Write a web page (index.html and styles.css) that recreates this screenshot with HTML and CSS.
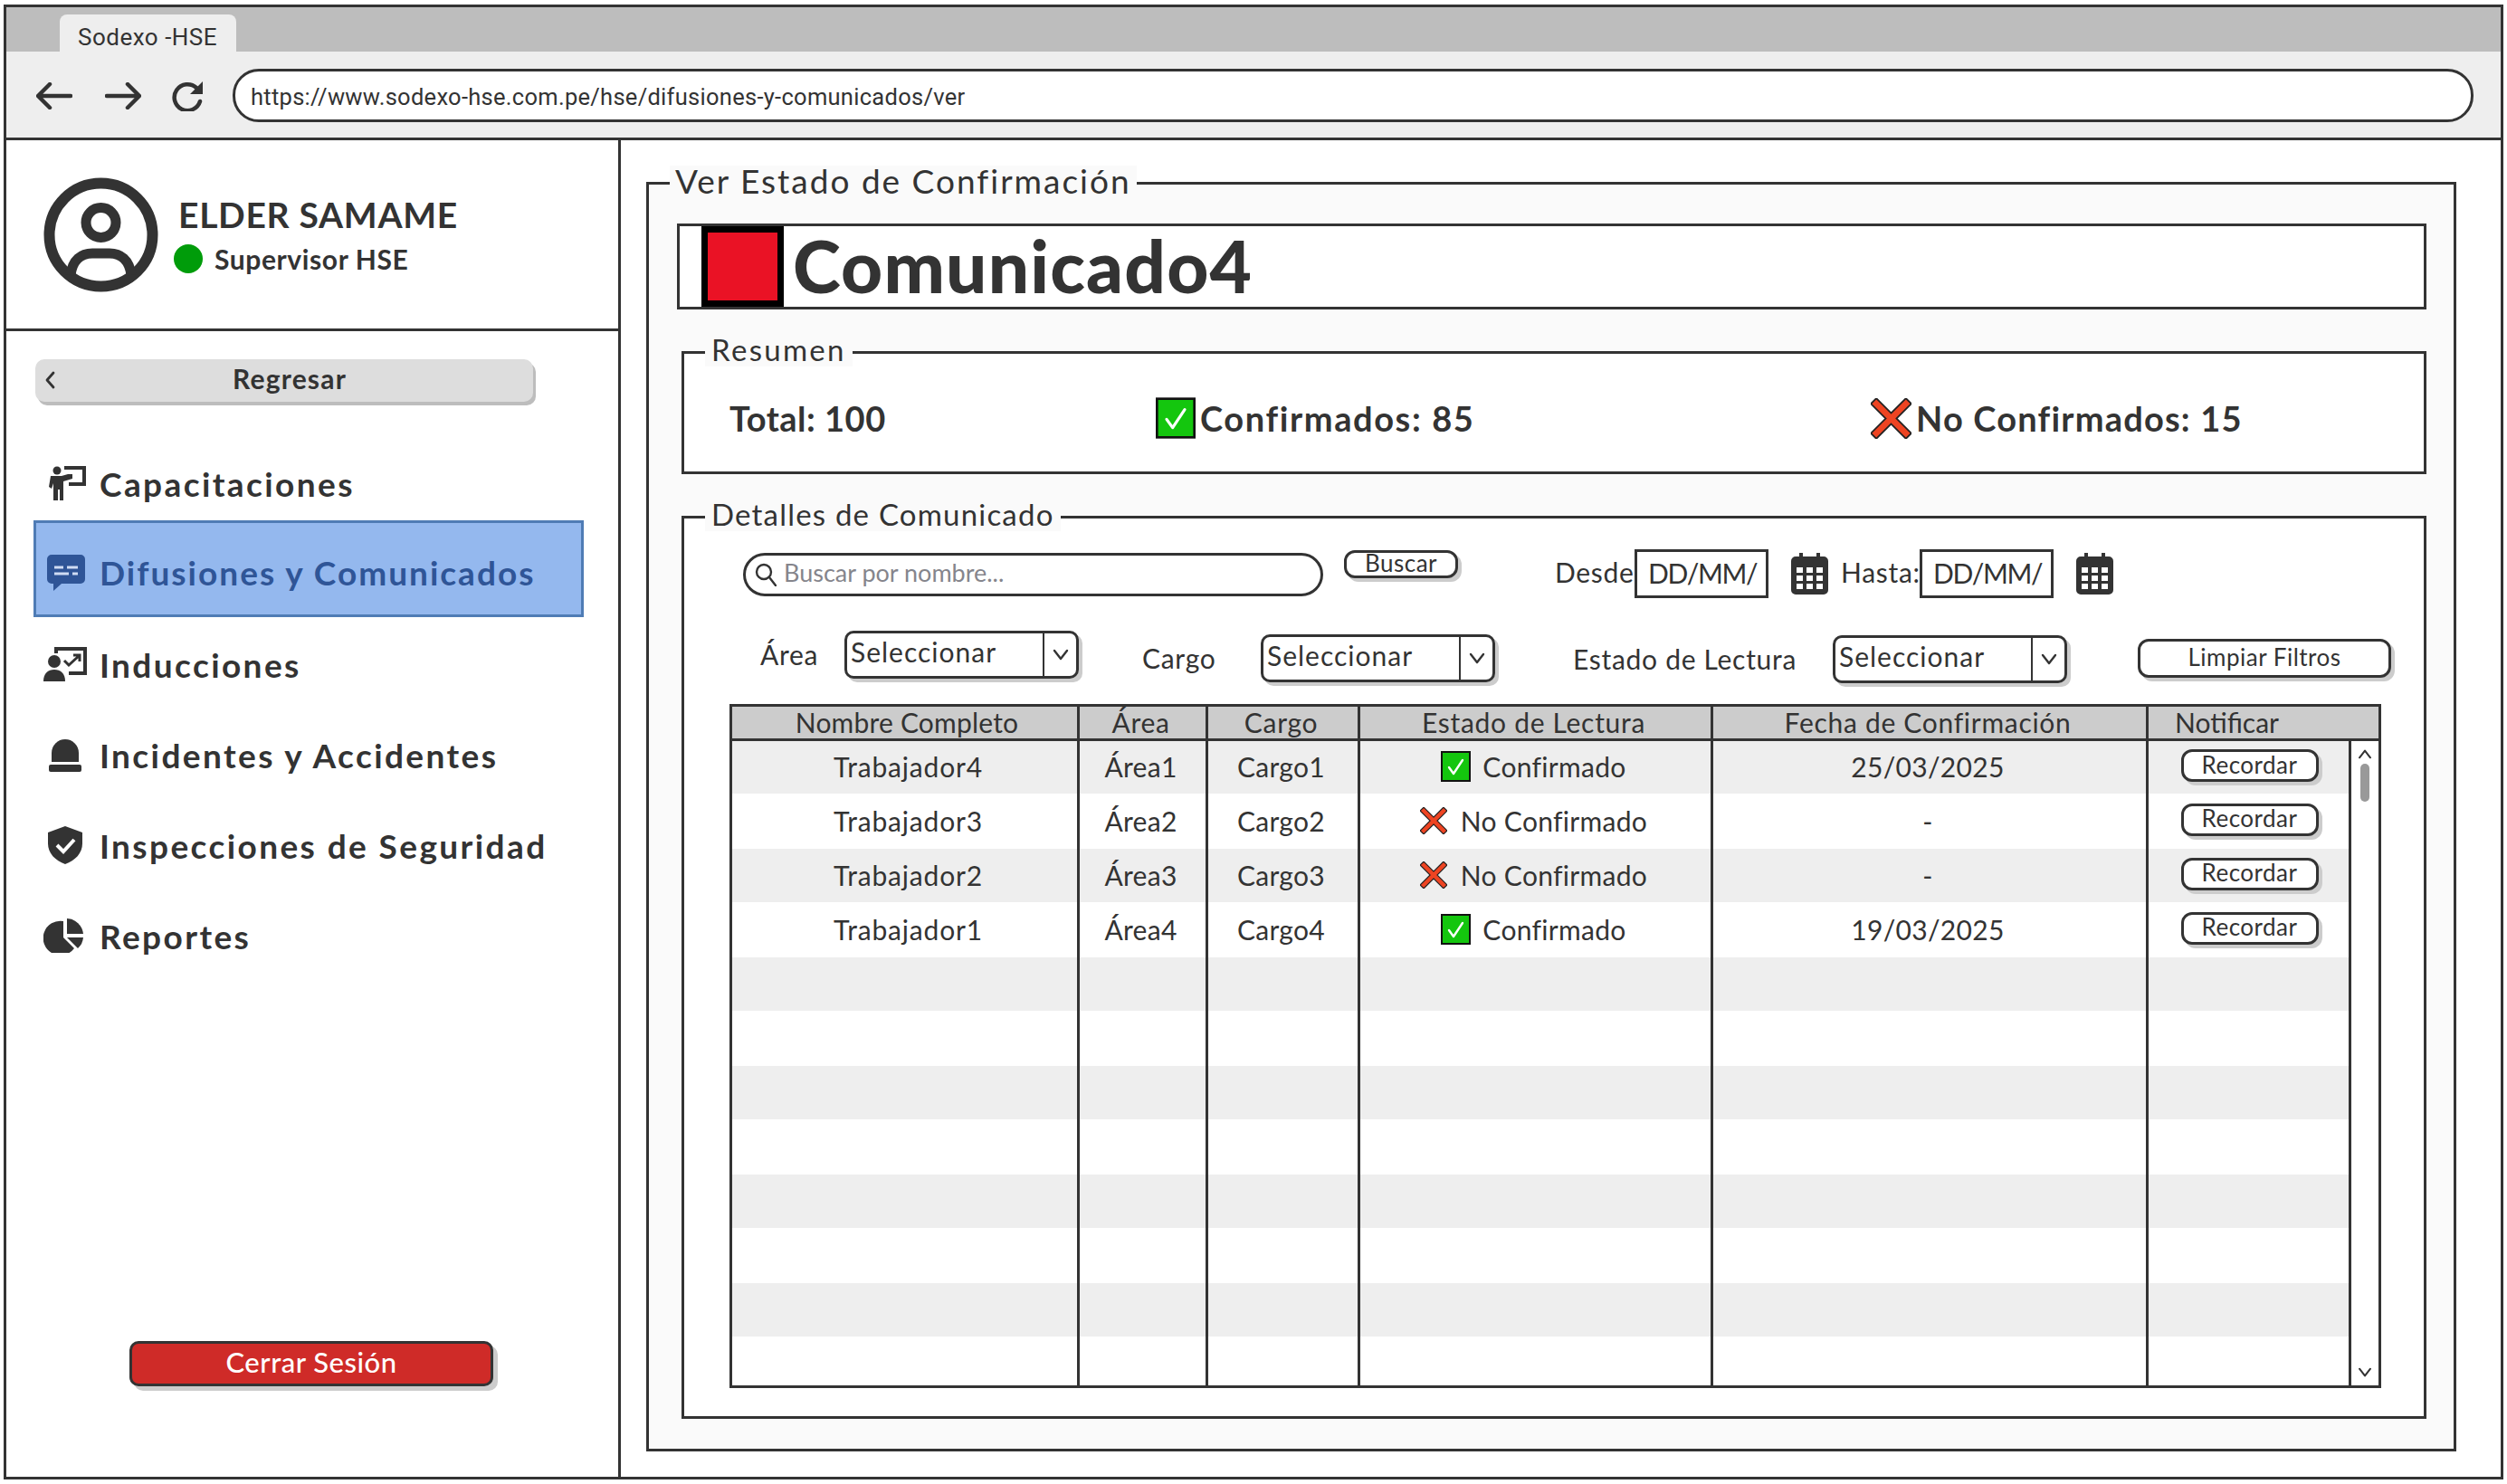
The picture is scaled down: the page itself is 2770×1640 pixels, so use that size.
FILE: index.html
```html
<!DOCTYPE html>
<html lang="es">
<head>
<meta charset="utf-8">
<title>Sodexo - HSE</title>
<link rel="stylesheet" href="styles.css">
</head>
<body>
<svg class="defs" width="0" height="0" aria-hidden="true">
  <symbol id="ico-check" viewBox="0 0 33 34">
    <rect x="1" y="1" width="31" height="32" fill="#14c60e" stroke="#111" stroke-width="2"/>
    <path d="M9 18l5 7 10-15" fill="none" stroke="#fff" stroke-width="2.4" stroke-linecap="round" stroke-linejoin="round"/>
  </symbol>
  <symbol id="ico-x" viewBox="0 0 44 44">
    <path d="M6 6L38 38M38 6L6 38" fill="none" stroke="#222" stroke-width="10" stroke-linecap="square"/>
    <path d="M6 6L38 38M38 6L6 38" fill="none" stroke="#ee4422" stroke-width="6.5" stroke-linecap="square"/>
  </symbol>
  <symbol id="ico-cal" viewBox="0 0 41 47">
    <path d="M5 5h4V1h4v4h15V1h4v4h4a5 5 0 0 1 5 5v32a5 5 0 0 1-5 5H5a5 5 0 0 1-5-5V10a5 5 0 0 1 5-5z" fill="#333"/>
    <path d="M6 17h7v6H6zM17 17h7v6h-7zM28 17h7v6h-7zM6 26h7v6H6zM17 26h7v6h-7zM28 26h7v6h-7zM6 35h7v6H6zM17 35h7v6h-7zM28 35h7v6h-7z" fill="#fff"/>
  </symbol>
  <symbol id="ico-caret" viewBox="0 0 18 14">
    <path d="M2 2l7 9 7-9" fill="none" stroke="#333" stroke-width="2.4" stroke-linecap="round" stroke-linejoin="round"/>
  </symbol>
</svg>

<div class="window">
  <header class="chrome">
    <div class="tabbar"><div class="tab">Sodexo -HSE</div></div>
    <div class="toolbar">
      <svg class="tb-icon" width="40" height="30" viewBox="0 0 40 30"><path d="M38 15H3M15 2L2 15l13 13" fill="none" stroke="#333" stroke-width="4.5" stroke-linecap="round" stroke-linejoin="round"/></svg>
      <svg class="tb-icon tb-forward" width="40" height="30" viewBox="0 0 40 30"><path d="M2 15h35M25 2l13 13-13 13" fill="none" stroke="#333" stroke-width="4.5" stroke-linecap="round" stroke-linejoin="round"/></svg>
      <svg class="tb-icon tb-reload" width="37" height="34" viewBox="0 0 37 34"><path d="M29 8a14.500 14.500 0 1 0 4 15" fill="none" stroke="#333" stroke-width="4.500" stroke-linecap="round"/><path d="M36 1v14H22z" fill="#333"/></svg>
      <div class="url">https://www.sodexo-hse.com.pe/hse/difusiones-y-comunicados/ver</div>
    </div>
  </header>

  <div class="app">
    <aside class="sidebar">
      <div class="profile">
        <svg class="avatar" width="127" height="127" viewBox="0 0 127 127">
          <circle cx="63.500" cy="63.500" r="57" fill="none" stroke="#333" stroke-width="12"/>
          <circle cx="63.500" cy="50" r="16.500" fill="none" stroke="#333" stroke-width="11"/>
          <path d="M30 108c2-17 12-24 24-24h19c12 0 22 7 24 24" fill="none" stroke="#333" stroke-width="11"/>
        </svg>
        <div class="who">
          <div class="who-name">ELDER SAMAME</div>
          <div class="who-role"><span class="dot"></span>Supervisor HSE</div>
        </div>
      </div>

      <button class="back"><svg class="back-chev" width="12" height="20" viewBox="0 0 12 20"><path d="M10 2L3 10l7 8" fill="none" stroke="#333" stroke-width="2.800" stroke-linecap="round" stroke-linejoin="round"/></svg><span>Regresar</span></button>

      <nav class="nav">
        <a class="nav-item">
          <svg class="nav-ico" width="48" height="40" viewBox="0 0 48 40" fill="#333"><circle cx="15" cy="6" r="4.500"/><path d="M8 12h12l7-2h5v5l-10 3v21h-4V27h-2v12h-5V20l-2 6-3-2z"/><path d="M23 1h24v22H28v-4h15V5H23z"/></svg>
          <span>Capacitaciones</span>
        </a>
        <a class="nav-item active">
          <svg class="nav-ico" width="48" height="42" viewBox="0 0 48 42"><path d="M9 1h32a5 5 0 0 1 5 5v22a5 5 0 0 1-5 5H20l-9 8v-8H9a5 5 0 0 1-5-5V6a5 5 0 0 1 5-5z" fill="#2f5597"/><path d="M12 15h10M26 15h12M12 22h16M32 22h6" stroke="#cfdcf3" stroke-width="3"/></svg>
          <span>Difusiones y Comunicados</span>
        </a>
        <a class="nav-item">
          <svg class="nav-ico" width="48" height="40" viewBox="0 0 48 40" fill="#333"><circle cx="12" cy="17" r="7"/><path d="M0 39c0-9 5-13 12-13s12 4 12 13z"/><path d="M12 1h36v31H28v-4h16V5H16v3h-4z"/><path d="M23 16l5 5 11-10M33 10h7v7" fill="none" stroke="#333" stroke-width="3"/></svg>
          <span>Inducciones</span>
        </a>
        <a class="nav-item">
          <svg class="nav-ico" width="48" height="38" viewBox="0 0 48 38" fill="#333"><path d="M9 27V17a15 15 0 0 1 30 0v10z"/><rect x="6" y="30" width="36" height="8" rx="2"/></svg>
          <span>Incidentes y Accidentes</span>
        </a>
        <a class="nav-item">
          <svg class="nav-ico" width="48" height="42" viewBox="0 0 48 42"><path d="M24 0l19 7v12c0 11-8 19-19 23C13 38 5 30 5 19V7z" fill="#333"/><path d="M15 21l7 7 12-13" fill="none" stroke="#fff" stroke-width="4"/></svg>
          <span>Inspecciones de Seguridad</span>
        </a>
        <a class="nav-item">
          <svg class="nav-ico" width="48" height="38" viewBox="0 0 48 38" fill="#333"><path d="M22 3v18l12 12a19 19 0 1 1-12-30z"/><path d="M26 0a19 19 0 0 1 18 17H26z"/><path d="M26 21h18a18 18 0 0 1-6 12z"/></svg>
          <span>Reportes</span>
        </a>
      </nav>

      <button class="logout">Cerrar Sesión</button>
    </aside>

    <main class="main">
      <fieldset class="panel">
        <legend class="panel-legend">Ver Estado de Confirmación</legend>
        <div class="panel-body">
          <div class="title-box">
            <span class="title-mark"></span>
            <h1 class="title">Comunicado4</h1>
          </div>

          <fieldset class="group group-summary">
            <legend class="group-legend">Resumen</legend>
            <div class="summary">
              <div class="stat stat-total">Total: 100</div>
              <div class="stat stat-ok"><svg class="stat-ico-check"><use href="#ico-check"/></svg>Confirmados: 85</div>
              <div class="stat"><svg class="stat-ico-x"><use href="#ico-x"/></svg>No Confirmados: 15</div>
            </div>
          </fieldset>

          <fieldset class="group group-details">
            <legend class="group-legend">Detalles de Comunicado</legend>

            <div class="search-row">
              <div class="search">
                <svg class="search-ico" width="24" height="26" viewBox="0 0 24 26"><circle cx="10" cy="10" r="8" fill="none" stroke="#333" stroke-width="2.400"/><path d="M16 16l7 9" stroke="#333" stroke-width="2.400" stroke-linecap="round"/></svg>
                <span>Buscar por nombre...</span>
              </div>
              <button class="btn btn-search">Buscar</button>
              <span class="lbl lbl-desde">Desde</span>
              <div class="date">DD/MM/</div>
              <svg class="cal"><use href="#ico-cal"/></svg>
              <span class="lbl lbl-hasta">Hasta:</span>
              <div class="date date-2">DD/MM/</div>
              <svg class="cal"><use href="#ico-cal"/></svg>
            </div>

            <div class="filter-row">
              <span class="lbl filter-lbl">Área</span>
              <div class="select"><span class="select-text">Seleccionar</span><span class="select-arrow"><svg class="caret"><use href="#ico-caret"/></svg></span></div>
              <span class="lbl filter-lbl shift-4">Cargo</span>
              <div class="select shift-4"><span class="select-text">Seleccionar</span><span class="select-arrow"><svg class="caret"><use href="#ico-caret"/></svg></span></div>
              <span class="lbl filter-lbl shift-5">Estado de Lectura</span>
              <div class="select shift-5"><span class="select-text">Seleccionar</span><span class="select-arrow"><svg class="caret"><use href="#ico-caret"/></svg></span></div>
              <button class="btn btn-clear">Limpiar Filtros</button>
            </div>

            <div class="table">
              <div class="thead">
                <div class="th">Nombre Completo</div>
                <div class="th">Área</div>
                <div class="th">Cargo</div>
                <div class="th">Estado de Lectura</div>
                <div class="th">Fecha de Confirmación</div>
                <div class="th th-notify">Notificar</div>
              </div>
              <div class="tbody">
                <div class="rows">
                  <div class="tr">
                    <div class="td">Trabajador4</div><div class="td">Área1</div><div class="td">Cargo1</div>
                    <div class="td td-state"><svg class="ico-ok"><use href="#ico-check"/></svg>Confirmado</div>
                    <div class="td">25/03/2025</div><div class="td"><button class="btn btn-remind">Recordar</button></div>
                  </div>
                  <div class="tr">
                    <div class="td">Trabajador3</div><div class="td">Área2</div><div class="td">Cargo2</div>
                    <div class="td td-state"><svg class="ico-no"><use href="#ico-x"/></svg>No Confirmado</div>
                    <div class="td">-</div><div class="td"><button class="btn btn-remind">Recordar</button></div>
                  </div>
                  <div class="tr">
                    <div class="td">Trabajador2</div><div class="td">Área3</div><div class="td">Cargo3</div>
                    <div class="td td-state"><svg class="ico-no"><use href="#ico-x"/></svg>No Confirmado</div>
                    <div class="td">-</div><div class="td"><button class="btn btn-remind">Recordar</button></div>
                  </div>
                  <div class="tr">
                    <div class="td">Trabajador1</div><div class="td">Área4</div><div class="td">Cargo4</div>
                    <div class="td td-state"><svg class="ico-ok"><use href="#ico-check"/></svg>Confirmado</div>
                    <div class="td">19/03/2025</div><div class="td"><button class="btn btn-remind">Recordar</button></div>
                  </div>
                  <div class="tr"><div class="td"></div><div class="td"></div><div class="td"></div><div class="td"></div><div class="td"></div><div class="td"></div></div>
                  <div class="tr"><div class="td"></div><div class="td"></div><div class="td"></div><div class="td"></div><div class="td"></div><div class="td"></div></div>
                  <div class="tr"><div class="td"></div><div class="td"></div><div class="td"></div><div class="td"></div><div class="td"></div><div class="td"></div></div>
                  <div class="tr"><div class="td"></div><div class="td"></div><div class="td"></div><div class="td"></div><div class="td"></div><div class="td"></div></div>
                  <div class="tr"><div class="td"></div><div class="td"></div><div class="td"></div><div class="td"></div><div class="td"></div><div class="td"></div></div>
                  <div class="tr"><div class="td"></div><div class="td"></div><div class="td"></div><div class="td"></div><div class="td"></div><div class="td"></div></div>
                  <div class="tr"><div class="td"></div><div class="td"></div><div class="td"></div><div class="td"></div><div class="td"></div><div class="td"></div></div>
                  <div class="tr"><div class="td"></div><div class="td"></div><div class="td"></div><div class="td"></div><div class="td"></div><div class="td"></div></div>
                </div>
                <div class="scrollbar">
                  <svg class="scroll-arrow scroll-up"><use href="#ico-caret"/></svg>
                  <span class="scroll-thumb"></span>
                  <svg class="scroll-arrow scroll-down"><use href="#ico-caret"/></svg>
                </div>
              </div>
            </div>
          </fieldset>
        </div>
      </fieldset>
    </main>
  </div>
</div>
</body>
</html>
```
FILE: styles.css
```css
* { box-sizing: border-box; }
html, body { margin: 0; padding: 0; background: #fff; }
body { font-family: "Lato", "Noto Sans", sans-serif; color: #333; }
.defs { position: absolute; }
button { font-family: inherit; color: inherit; cursor: pointer; }

.window {
  margin: 5px 0 0 4px;
  width: 2762px;
  height: 1630px;
  border: 3px solid #333;
  display: flex;
  flex-direction: column;
}

/* browser chrome */
.tabbar { height: 49px; background: #bdbdbd; padding-left: 59px; display: flex; align-items: flex-end; }
.tab {
  width: 195px; height: 41px; background: #eee; border-radius: 8px 8px 0 0;
  padding: 5px 0 0 20px; font: 26px/40px "Roboto", sans-serif; letter-spacing: 0.5px;
}
.toolbar {
  height: 98px; background: #eee; border-bottom: 3px solid #333;
  display: flex; align-items: center; padding: 2px 30px 0 33px;
}
.tb-forward { margin-left: 36px; }
.tb-reload { margin-left: 32px; }
.url {
  margin-left: 32px; flex: 1; height: 59px; background: #fff;
  border: 3px solid #333; border-radius: 29px; padding: 2px 0 0 17px;
  font: 25.500px/53px "Roboto", sans-serif; letter-spacing: 0.28px;
}

.app { flex: 1; display: flex; min-height: 0; }

/* sidebar */
.sidebar { width: 679px; border-right: 3px solid #333; display: flex; flex-direction: column; background: #fff; }
.profile {
  height: 211px; border-bottom: 3px solid #333; padding: 0 0 0 41px;
  display: flex; align-items: center; gap: 22px;
}
.who-name { font-size: 39px; font-weight: 700; line-height: 46px; letter-spacing: 0.7px; }
.who-role { display: flex; align-items: center; gap: 13px; font-size: 30px; font-weight: 700; line-height: 36px; margin: 8px 0 0 -5px; letter-spacing: 0.6px; }
.dot { width: 32px; height: 32px; border-radius: 50%; background: #009c0a; }

.back {
  position: relative; margin: 31px 0 0 32px; width: 550px; height: 47px; border: 0;
  border-radius: 10px; background: #ddd; box-shadow: 3px 4px 0 #bdbdbd;
  font-size: 30px; font-weight: 700; padding: 0 0 6px 12px; letter-spacing: 1.2px;
}
.back-chev { position: absolute; left: 10px; top: 13px; }

.nav { display: flex; flex-direction: column; margin: 61px 0 0 30px; width: 608px; }
.nav-item {
  height: 62px; padding: 0 0 2px 11px; display: flex; align-items: center; gap: 14px;
  font-size: 37px; font-weight: 700; letter-spacing: 2.4px;
}
.nav-item:first-child { padding-bottom: 4px; }
.nav-item + .nav-item { margin-top: 38px; }
.nav-item + .active { margin-top: 8px; height: 107px; padding: 8px 0 0 8px; background: #94b8ee; border: 3px solid #4f7cb5; color: #2f5597; letter-spacing: 2px; }
.active + .nav-item { margin-top: 22px; }
.nav-ico { flex: none; }

.logout {
  margin: auto 0 100px 136px; width: 402px; height: 50px; background: #cf2b28; color: #fff;
  border: 3px solid #333; border-radius: 10px; box-shadow: 5px 5px 0 #ccc;
  font-size: 31px; font-weight: 500; padding: 0 0 4px; letter-spacing: 0.5px;
}

/* main */
.main { flex: 1; padding: 28px 49px 0 28px; background: #fff; }
fieldset { margin: 0; padding: 0; min-width: 0; border: 3px solid #333; }
.panel { height: 1421px; background: #fafafa; }
.panel-legend { margin-left: 23px; padding: 0 6px 6px; background: #fafafa; font-size: 37px; line-height: 33px; letter-spacing: 2px; }
.panel-body { padding: 25px 30px 0 31px; }

.title-box { height: 95px; background: #fff; border: 3px solid #333; display: flex; align-items: center; }
.title-mark { margin-left: 24px; width: 91px; height: 89px; background: #ea1225; border: 7px solid #000; flex: none; }
.title { margin: -4px 0 0 10px; font-size: 80px; font-weight: 900; line-height: 88px; letter-spacing: 1.2px; }

.group { margin: 32px 0 0 5px; background: #fff; }
.group-legend { margin-left: 23px; padding: 0 7px 6px; background: #fafafa; font-size: 33px; line-height: 25px; letter-spacing: 1.2px; }
.group-summary .group-legend { letter-spacing: 2.3px; }
.group-summary { height: 150px; }
.summary { height: 116px; padding: 0 0 2px 50px; display: grid; grid-template-columns: 471px 790px 1fr; align-items: center; }
.stat { display: flex; align-items: center; font-size: 38px; font-weight: 700; letter-spacing: 1.2px; }
.stat-total { letter-spacing: 0.5px; }
.stat-ok { letter-spacing: 1.6px; }
.stat-ico-check { width: 44px; height: 46px; margin-right: 5px; }
.stat-ico-x { width: 45px; height: 45px; margin-right: 5px; }

.group-details { height: 1012px; }
.search-row { display: flex; align-items: flex-start; height: 54px; margin-top: 20px; padding-left: 65px; }
.search {
  width: 641px; height: 48px; margin-top: 4px; border: 3px solid #333; border-radius: 24px; background: #fff;
  display: flex; align-items: center; padding: 0 0 6px 10px; font-size: 27px; color: #85858c; gap: 8px;
}
.search-ico { flex: none; margin-top: 6px; }
.btn { background: #fff; border: 3px solid #333; border-radius: 12px; box-shadow: 4px 4px 0 #ccc; font-size: 26px; padding: 0 0 3px; letter-spacing: 0.5px; }
.btn-search { width: 126px; height: 31px; margin: 1px 0 0 23px; line-height: 22px; }
.lbl { font-size: 30px; white-space: nowrap; letter-spacing: 0.7px; }
.lbl-desde { margin: 7px 0 0 107px; width: 88px; }
.date { width: 148px; height: 54px; border: 3px solid #333; background: #fff; font-size: 30px; line-height: 46px; padding-left: 12px; letter-spacing: -1.3px; }
.cal { width: 41px; height: 47px; margin: 3px 0 0 25px; }
.lbl-hasta { margin: 7px 0 0 14px; width: 87px; }

.filter-row { margin: 36px 0 0 84px; display: grid; grid-template-columns: 93px 329px 131px 345px 287px 337px 279px; align-items: start; }
.filter-lbl { line-height: 53px; }
.select { width: 259px; height: 53px; border: 3px solid #333; border-radius: 10px; background: #fff; box-shadow: 4px 4px 0 #ccc; display: flex; font-size: 30px; line-height: 40px; letter-spacing: 1px; }
.select-text { width: 216px; padding-left: 4px; }
.select-arrow { flex: 1; border-left: 2px solid #333; display: flex; align-items: center; justify-content: center; }
.caret { width: 18px; height: 14px; }
.shift-4 { margin-top: 4px; }
.shift-5 { margin-top: 5px; }
.btn-clear { width: 280px; height: 43px; margin-top: 9px; }

.table { margin: 23px 0 0 50px; width: 1825px; height: 756px; border: 3px solid #333; background: #fff; display: flex; flex-direction: column; }
.thead { display: grid; height: 38px; border-bottom: 3px solid #333; background: #ccc; grid-template-columns: 384px 142px 168px 390px 481px 1fr; }
.th { border-right: 3px solid #333; text-align: center; font-size: 30px; line-height: 35px; letter-spacing: 0.7px; padding-right: 4px; }
.th:first-child { padding: 0 0 0 5px; letter-spacing: 0.2px; }
.th-notify { border-right: 0; text-align: left; padding: 0 0 0 29px; letter-spacing: 0; }
.tbody { flex: 1; display: flex; min-height: 0; }
.rows { flex: 1; }
.tr { display: grid; height: 59px; grid-template-columns: 384px 142px 168px 390px 481px 1fr; }
.tr:nth-child(1) { height: 58px; }
.tr:nth-child(even) { height: 61px; }
.tr:last-child { height: 56px; }
.tr:nth-child(odd) { background: #eee; }
.td { border-right: 3px solid #333; display: flex; align-items: center; justify-content: center; font-size: 30px; letter-spacing: 0.3px; padding: 0 4px 2px 0; }
.td:first-child { padding: 0 0 2px 8px; letter-spacing: 0.8px; }
.td:last-child { padding: 0 0 0 2px; }
.ico-ok { width: 33px; height: 34px; margin-right: 13px; }
.ico-no { width: 30px; height: 30px; margin-right: 15px; }
.btn-remind { width: 152px; height: 36px; margin-bottom: 4px; line-height: 24px; }
.scrollbar { width: 30px; display: flex; flex-direction: column; align-items: center; background: #fff; }
.scroll-arrow { width: 16px; height: 12px; flex: none; }
.scroll-up { margin-top: 8px; transform: scaleY(-1); }
.scroll-thumb { width: 10px; height: 42px; margin-top: 5px; border-radius: 5px; background: #999; }
.scroll-down { margin-top: auto; margin-bottom: 8px; }
```
